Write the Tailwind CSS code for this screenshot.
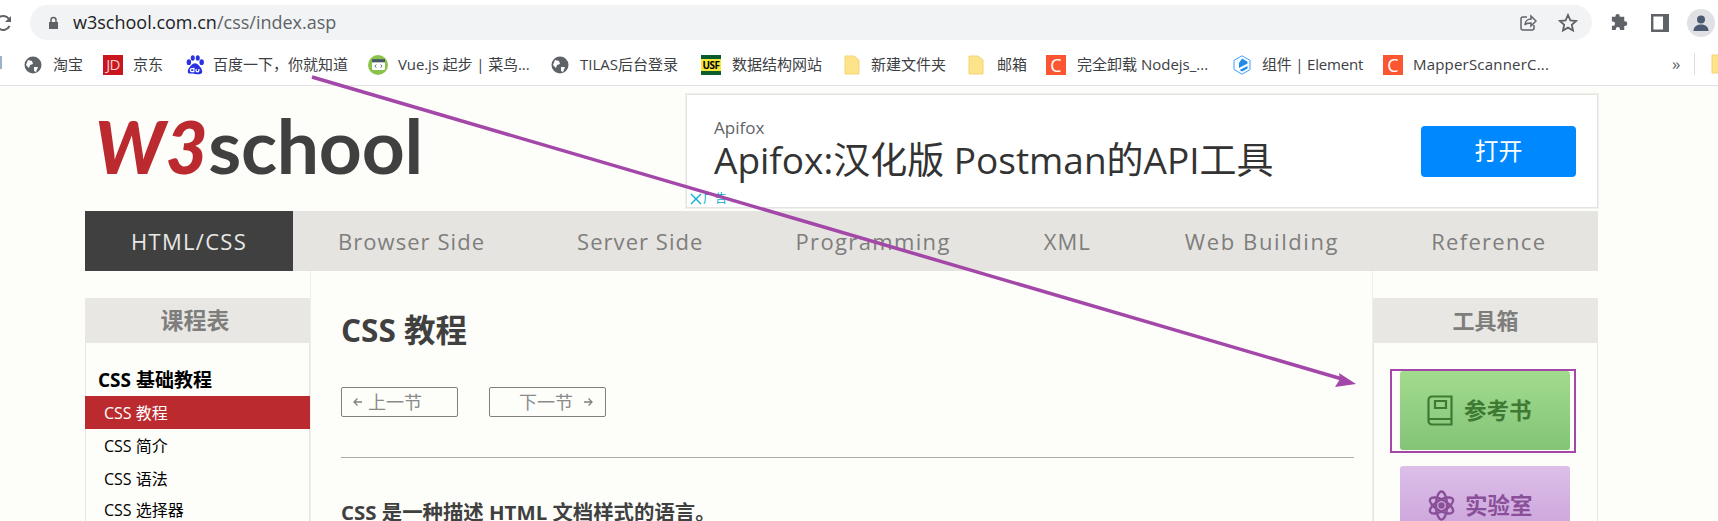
<!doctype html>
<html><head><meta charset="utf-8"><script src="https://cdn.jsdelivr.net/npm/@tailwindcss/browser@4"></script></head>
<body class="m-0">
<div class="relative w-[1718px] h-[521px] overflow-hidden bg-[#fdfdfa] font-['Open_Sans','Noto_Sans_CJK_SC',sans-serif]">
  <!-- browser chrome -->
  <div class="h-[86px] bg-white border-b border-[#dfe1e5] flex flex-col">
    <div class="h-[46px] flex items-center pb-[1px]">
      <svg class="w-[14px] h-[18px] ml-[-3px] shrink-0" viewBox="0 0 14 18" fill="none" stroke="#5f6368" stroke-width="2"><path d="M12 5A7 7 0 1 0 12.500 12"/><path fill="#5f6368" stroke="none" d="M14 2v6H8z"/></svg>
      <div class="ml-[19px] w-[1562px] h-[35px] rounded-full bg-[#f1f3f4] flex items-center pl-[18px] pr-[14px] shrink-0">
        <svg class="w-[11px] h-[14px] shrink-0" viewBox="0 0 11 14"><path fill="#5f6368" d="M1 6h9v7H1z"/><path fill="none" stroke="#5f6368" stroke-width="1.500" d="M3 6V4a2.500 2.500 0 0 1 5 0v2"/></svg>
        <span class="ml-[14px] text-[18px] text-[#202124]">w3school.com.cn<span class="text-[#5f6368]">/css/index.asp</span></span>
        <svg class="ml-auto w-[18px] h-[18px]" viewBox="0 0 18 18" fill="none" stroke="#5f6368" stroke-width="1.500"><path d="M8 3H4a2 2 0 0 0-2 2v9a2 2 0 0 0 2 2h9a2 2 0 0 0 2-2v-3"/><path d="M6 11c0-4 3-6 6-6V2l5 5-5 5V9c-3 0-5 0-6 2z"/></svg>
        <svg class="ml-[21px] w-[20px] h-[20px]" viewBox="0 0 20 20" fill="none" stroke="#5f6368" stroke-width="1.800"><path d="M10 2l2.400 5.400 5.600.6-4.200 3.800 1.200 5.700-5-2.900-5 2.900 1.200-5.700L2 8l5.600-.6z"/></svg>
      </div>
      <svg class="ml-[18px] w-[19px] h-[19px] shrink-0" viewBox="0 0 20 20" fill="#5f6368"><path d="M8 1a2.300 2.300 0 0 1 2.300 2.300V4H15v4.700h.7a2.500 2.500 0 0 1 0 5H15V18h-4.500v-1a2.200 2.200 0 0 0-4.400 0v1H2v-4.500h1a2.300 2.300 0 0 0 0-4.600H2V4h3.700v-.7A2.300 2.300 0 0 1 8 1z"/></svg>
      <svg class="ml-[22px] w-[18px] h-[18px] shrink-0" viewBox="0 0 18 18" fill="none" stroke="#5f6368" stroke-width="2.400"><path d="M1.200 1.200h15.600v15.600H1.200z"/><path fill="#5f6368" stroke="none" d="M12 1h5v16h-5z"/></svg>
      <div class="ml-[18px] w-[28px] h-[28px] rounded-full bg-[#dfe1e5] flex items-center justify-center shrink-0">
        <svg class="w-[18px] h-[18px]" viewBox="0 0 18 18" fill="#4b5a70"><circle cx="9" cy="5.500" r="4"/><path d="M1.500 17c0-4 3-6.500 7.500-6.500s7.500 2.500 7.500 6.500z"/></svg>
      </div>
    </div>
    <div class="relative h-[39px] text-[15px] text-[#3c4043]">
      <div class="absolute left-0 top-[10px] w-[2px] h-[13px] bg-[#5b7fa0]/60"></div>
      <div class="flex items-center h-full pl-[24px] pb-[2px] whitespace-nowrap">
        <svg class="w-[18px] h-[18px] shrink-0" viewBox="0 0 18 18"><circle cx="9" cy="9" r="8.500" fill="#5f6368"/><path fill="#fff" d="M4 4l4 1 1 3-3 1-1 3-3-3zM10 11h4l-2 5-2-1z"/></svg>
        <span class="ml-[11px] w-[50px]">淘宝</span>
        <span class="w-[20px] h-[20px] bg-[#c9151e] text-[#f5d0d0] text-[15px] flex items-center justify-center shrink-0 leading-none tracking-tighter">JD</span>
        <span class="ml-[10px] w-[52px]">京东</span>
        <svg class="w-[20px] h-[20px] shrink-0" viewBox="0 0 18 18" fill="#2932e1"><ellipse cx="3.500" cy="6.500" rx="2" ry="2.600"/><ellipse cx="7" cy="2.700" rx="1.800" ry="2.500"/><ellipse cx="11.500" cy="2.700" rx="1.800" ry="2.500"/><ellipse cx="15" cy="6.500" rx="2" ry="2.600"/><path d="M9 7.500c2.500 0 6.500 4.500 6.500 7.500 0 2.500-3.500 2.500-6.500 2s-6.500.5-6.500-2c0-3 4-7.500 6.500-7.500z"/><path fill="none" stroke="#fff" stroke-width="1.100" d="M8 11.500v3.500H6.200a1.200 1.200 0 0 1 0-2.800H8M10 12.500v1.500a1 1 0 0 0 2.500 0v-1.500"/></svg>
        <span class="ml-[8px] w-[155px]">百度一下，你就知道</span>
        <span class="w-[20px] h-[20px] rounded-full bg-[#8bc34a] flex items-center justify-center shrink-0"><svg class="w-[13px] h-[11px]" viewBox="0 0 12 10"><rect width="12" height="10" rx="1" fill="#fff"/><rect width="12" height="3" fill="#455a64"/><path stroke="#455a64" stroke-width=".8" fill="none" d="M4 5L2.800 6.500 4 8M8 5l1.200 1.500L8 8"/></svg></span>
        <span class="ml-[10px] w-[153px] tracking-[-0.1px]">Vue.js 起步 | 菜鸟...</span>
        <svg class="w-[18px] h-[18px] shrink-0" viewBox="0 0 18 18"><circle cx="9" cy="9" r="8.500" fill="#5f6368"/><path fill="#fff" d="M4 4l4 1 1 3-3 1-1 3-3-3zM10 11h4l-2 5-2-1z"/></svg>
        <span class="ml-[11px] w-[121px]">TILAS后台登录</span>
        <span class="w-[20px] h-[20px] bg-[#0a5c2d] shrink-0 flex items-center"><span class="w-full h-[12px] bg-[#f5e63c] text-black text-[10px] font-bold flex items-center justify-center leading-none tracking-[-0.5px]">USF</span></span>
        <span class="ml-[11px] w-[112px]">数据结构网站</span>
        <svg class="w-[16px] h-[20px] shrink-0" viewBox="0 0 16 20"><path fill="#fde48b" stroke="#f3d478" d="M1 1h9l5 4v14H1z"/></svg>
        <span class="ml-[11px] w-[97px]">新建文件夹</span>
        <svg class="w-[16px] h-[20px] shrink-0" viewBox="0 0 16 20"><path fill="#fde48b" stroke="#f3d478" d="M1 1h9l5 4v14H1z"/></svg>
        <span class="ml-[13px] w-[49px]">邮箱</span>
        <span class="w-[20px] h-[20px] bg-[#fc5531] text-white text-[18px] flex items-center justify-center shrink-0 leading-none">C</span>
        <span class="ml-[11px] w-[155px]">完全卸载 Nodejs_...</span>
        <svg class="w-[20px] h-[20px] shrink-0" viewBox="0 0 20 20"><path fill="#fff" stroke="#409eff" d="M10 .8l8 4.600v9.200l-8 4.600-8-4.600V5.400z"/><path fill="#1f8ceb" d="M10 3.500l5.500 3.200v1.800L7 13V8z"/><path fill="#1f8ceb" d="M15.500 11v2.500L10 16.500l-2.500-1.500z"/></svg>
        <span class="ml-[10px] w-[121px] tracking-[-0.2px]">组件 | Element</span>
        <span class="w-[20px] h-[20px] bg-[#fc5531] text-white text-[18px] flex items-center justify-center shrink-0 leading-none">C</span>
        <span class="ml-[10px] tracking-[0.2px]">MapperScannerC...</span>
      </div>
      <span class="absolute left-[1672px] top-[5px] text-[17px] text-[#5f6368]">»</span>
      <div class="absolute left-[1694px] top-[7px] w-px h-[22px] bg-[#dadce0]"></div>
      <svg class="absolute left-[1711px] top-[8px] w-[16px] h-[20px]" viewBox="0 0 16 20"><path fill="#fde48b" stroke="#f3d478" d="M1 1h9l5 4v14H1z"/></svg>
    </div>
  </div>

  <!-- page -->
  <div class="ml-[85px] w-[1513px]">
    <div class="h-[125px] flex items-start">
      <div class="w-[601px] pl-[10px] pt-[16px] leading-[86px] whitespace-nowrap font-['Lato','Noto_Sans',sans-serif]">
        <span class="text-[72px] font-black italic text-[#bb2a2f] tracking-[0.01em]">W3</span><span class="text-[75px] font-bold text-[#404040] tracking-[-0.3px]">school</span>
      </div>
      <div class="mt-[8px] w-[912px] h-[114px] bg-white border border-[#e4e4e2] outline outline-[#efefec] relative flex items-center pl-[27px] pr-[21px]">
        <div class="flex-1 -mt-[5px]">
          <div class="text-[17px] text-[#5f6368] leading-[22px]">Apifox</div>
          <div class="text-[37px] text-[#333] leading-[42px]">Apifox:汉化版 Postman的API工具</div>
        </div>
        <div class="w-[155px] h-[51px] rounded-[4px] bg-[#0088ff] text-white text-[24px] flex items-center justify-center">打开</div>
        <div class="absolute left-[3px] bottom-[2px] flex items-center text-[12px] text-[#00aecd] leading-none"><svg class="w-[12px] h-[12px]" viewBox="0 0 12 12" fill="none" stroke="#00aecd" stroke-width="1.300"><path d="M1 1l10 10M11 1L1 11"/></svg><span class="ml-[1px]">广告</span></div>
      </div>
    </div>
    <nav class="h-[60px] bg-[#e5e4e1] flex items-center text-[22px] text-[#7e7e7c] tracking-[1.050px] whitespace-nowrap">
      <div class="w-[208px] h-full bg-[#404040] text-[#e8e8e6] flex items-center justify-center tracking-[1.300px]">HTML/CSS</div>
      <span class="ml-[45px]">Browser Side</span>
      <span class="ml-[92px]">Server Side</span>
      <span class="ml-[92px] tracking-[1.350px]">Programming</span>
      <span class="ml-[93px]">XML</span>
      <span class="ml-[94px] tracking-[1.600px]">Web Building</span>
      <span class="ml-[92px] tracking-[1.300px]">Reference</span>
    </nav>
    <div class="flex items-stretch">
      <aside class="w-[226px] h-[250px] pt-[27px] border-r border-[#eeeeea] shrink-0">
        <div class="h-[45px] bg-[#e8e7e4] text-[#7e7e7c] text-[23px] font-semibold flex items-center justify-center pr-[5px]">课程表</div>
        <div class="border-x border-[#e5e5e2] h-[178px] bg-[#fdfdfa]">
          <div class="pl-[12px] pt-[23px] h-[53px] text-[19px] font-bold text-black leading-[28px]">CSS 基础教程</div>
          <ul class="text-[16px] -mx-px">
            <li class="h-[33px] bg-[#bb2a2f] text-white pl-[19px] flex items-center">CSS 教程</li>
            <li class="h-[33px] text-black pl-[19px] flex items-center">CSS 简介</li>
            <li class="h-[33px] text-black pl-[19px] flex items-center">CSS 语法</li>
            <li class="h-[26px] text-black pl-[19px] flex items-center pt-[5px] leading-[21px]">CSS 选择器</li>
          </ul>
        </div>
      </aside>
      <main class="w-[1061px] pl-[30px] pr-[18px]">
        <h1 class="mt-[39px] h-[40px] text-[31.500px] font-bold text-[#404040] leading-[40px]">CSS 教程</h1>
        <div class="mt-[37px] flex gap-[31px]">
          <div class="w-[117px] h-[30px] border border-[#808080] rounded-[2px] text-[18px] text-[#8b8b8b] flex items-center pl-[11px]"><svg class="w-[10px] h-[10px] mr-[5px]" viewBox="0 0 10 10" fill="none" stroke="#808080" stroke-width="1.300"><path d="M9 5H1.500M4.500 1.500L1 5l3.500 3.500"/></svg>上一节</div>
          <div class="w-[117px] h-[30px] border border-[#808080] rounded-[2px] text-[18px] text-[#8b8b8b] flex items-center pl-[29px]">下一节<svg class="w-[10px] h-[10px] ml-[10px]" viewBox="0 0 10 10" fill="none" stroke="#808080" stroke-width="1.300"><path d="M1 5h7.500M5.500 1.500L9 5 5.500 8.500"/></svg></div>
        </div>
        <hr class="mt-[40px] border-0 h-px bg-[#aaaaa8]">
        <p class="mt-[45px] text-[20.400px] font-bold text-[#404040] leading-[18px] whitespace-nowrap">CSS 是一种描述 HTML 文档样式的语言。</p>
      </main>
      <aside class="w-[226px] h-[250px] pt-[27px] border-l border-[#eeeeea] shrink-0">
        <div class="h-[45px] bg-[#e8e7e4] text-[#7e7e7c] text-[22px] font-semibold flex items-center justify-center">工具箱</div>
        <div class="border-x border-[#e5e5e2] pt-[28px] pl-[26px] h-[178px]">
          <div class="w-[170px] h-[79px] rounded-[3px] bg-linear-to-b from-[#a2db8e] to-[#83c477] flex items-center pl-[27px] text-[22.500px] font-semibold text-[#3f7a35]">
            <svg class="w-[26px] h-[31px] mr-[11px]" viewBox="0 0 26 31" fill="none" stroke="#3f7a35" stroke-width="2.200"><path d="M5 1.500h19.500v28H5a3.500 3.500 0 0 1-3.500-3.500V5A3.500 3.500 0 0 1 5 1.500z"/><path d="M2 24h22.500M8 6h11v7H8z"/></svg>参考书
          </div>
          <div class="mt-[16px] w-[170px] h-[79px] rounded-[3px] bg-linear-to-b from-[#dcbfe9] to-[#c89fd8] flex items-center pl-[27px] text-[22.500px] font-semibold text-[#8a4f99]">
            <svg class="w-[29px] h-[31px] mr-[9px]" viewBox="0 0 29 31" fill="none" stroke="#8a4f99" stroke-width="2.400"><ellipse cx="14.500" cy="15.500" rx="13" ry="5.500" transform="rotate(30 14.500 15.500)"/><ellipse cx="14.500" cy="15.500" rx="13" ry="5.500" transform="rotate(-30 14.500 15.500)"/><ellipse cx="14.500" cy="15.500" rx="5.500" ry="14"/><circle cx="14.500" cy="15.500" r="2" fill="#8a4f99"/></svg>实验室
          </div>
        </div>
      </aside>
    </div>
  </div>

  <!-- annotation overlay -->
  <div class="absolute left-[1390px] top-[369px] w-[186px] h-[84px] border-2 border-[#a347a8]"></div>
  <svg class="absolute inset-0 w-[1718px] h-[521px] pointer-events-none" viewBox="0 0 1718 521"><path d="M312 77L1342 379" stroke="#a347a8" stroke-width="3.500" fill="none"/><path d="M1356 384L1335 387 1340 379 1339 373z" fill="#a347a8"/></svg>
</div>
</body></html>
